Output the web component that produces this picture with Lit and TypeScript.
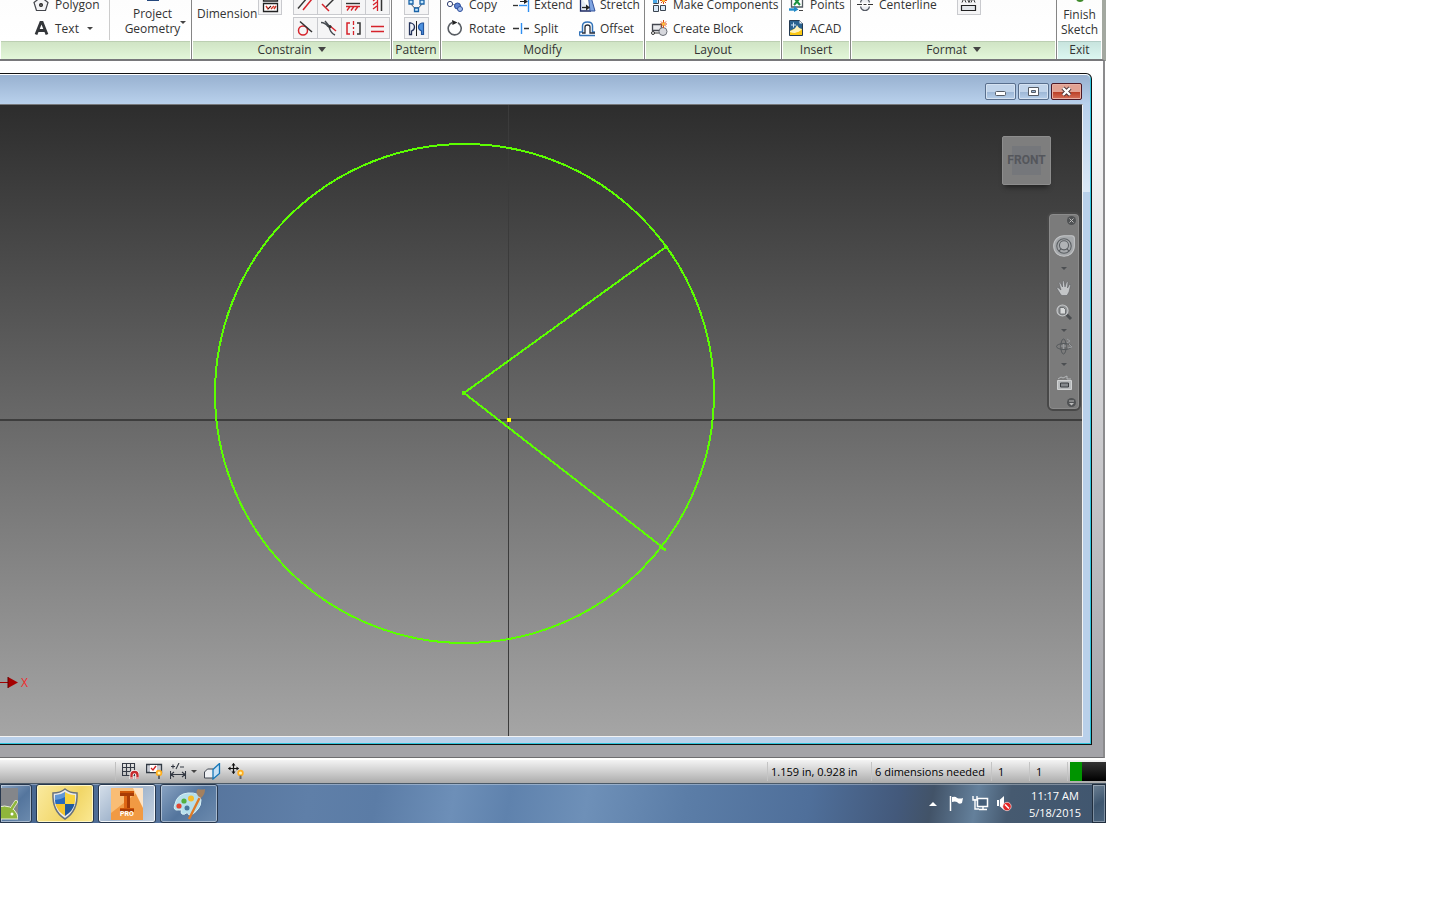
import { LitElement, html, svg, css } from "lit";
import type { SVGTemplateResult } from "lit";
import { customElement, property } from "lit/decorators.js";

const glyphs: Record<string, SVGTemplateResult> = {
  polygon: svg`<path d="M3.500 14.500 1 6.500 8 1l7 5.500-2.500 8z" fill="#f4f4f6" stroke="#44464c" stroke-width="1.200"/><circle cx="8" cy="9" r="2" fill="#222"/><circle cx="8" cy="9" r=".6" fill="#fff"/>`,
  text: svg`<path d="M3 14.500 7.800 2.500h1.400L14 14.500M5 10.500h7" fill="none" stroke="#33363a" stroke-width="2.800"/>`,
  copy: svg`<circle cx="3" cy="8" r="2.600" fill="#fff" stroke="#2d3c6e"/><path d="M6.500 8.500h2" stroke="#333" stroke-dasharray="1 1"/><circle cx="10.500" cy="10" r="3" fill="#5f83cf" stroke="#2b4c9b"/><circle cx="13" cy="13" r="2.500" fill="#a3bce9" stroke="#2b4c9b"/>`,
  rotate: svg`<path d="M11 2.800A6.500 6.500 0 1 1 5 2.500" fill="none" stroke="#595d63" stroke-width="1.600"/><path d="M5 0l5.500 2.600L5.500 5z" fill="#222"/>`,
  extend: svg`<path d="M0 9.500h5" stroke="#333" stroke-width="1.300"/><path d="M6 9.500h8" stroke="#2f8ff2" stroke-width="1.400"/><path d="M7 5.500h5" stroke="#222"/><path d="M11 3l4 2.500L11 8z" fill="#222"/><path d="M15.500 0v16" stroke="#2f8ff2" stroke-width="1.400"/>`,
  split: svg`<path d="M0 8.500h6M11 8.500h5" stroke="#333" stroke-width="1.400"/><path d="M8.500 3v11" stroke="#2f8ff2" stroke-width="1.400"/>`,
  stretch: svg`<path d="M1.500 1v14H12" fill="#e4eaf5" stroke="#1d2a63" stroke-width="1.300"/><path d="M9.500 1H12l4 14h-5z" fill="#7fa5e2" stroke="#34539b"/><path d="M3 11.500h5" stroke="#222" stroke-width="1.300"/><path d="M7 8.500l4 3-4 3z" fill="#222"/>`,
  offset: svg`<path d="M.5 15.500v-3.500h3V6q0-4 5-4t5 4v6h2.500M.5 15.500H16" fill="#fff" stroke="#3474b9" stroke-width="1.500"/><path d="M3 13h3V7q0-2 2.500-2T11 7v6h5" fill="none" stroke="#272d38" stroke-width="1.300"/>`,
  components: svg`<path d="M2.500 2.500h5v5h-5zM2.500 9.500h5v6h-5zM9.500 9.500h5v5h-5z" fill="#d9e9f8" stroke="#3a4450"/><path d="M2 2h4v5H2z" fill="#48a8e8"/><path d="M12.500 1v7M9 4.500h7M10 2l5 5M15 2l-5 5" stroke="#df4d14"/><circle cx="12.500" cy="4.500" r="1.500" fill="#ffc13a"/>`,
  block: svg`<path d="M1.500 4.500h9v6h-9z" fill="#e9eaed" stroke="#454850" stroke-width="1.300"/><circle cx="12" cy="11.500" r="4" fill="#d7d8dd" stroke="#696d75"/><circle cx="2" cy="13" r="1.500" fill="#fff" stroke="#333"/><path d="M3 13h5" stroke="#333"/><path d="M12.500 0v8M9 4h7M10 1.500l5 5M15 1.500l-5 5" stroke="#df4d14"/><circle cx="12.500" cy="4" r="1.600" fill="#ffc13a"/>`,
  points: svg`<path d="M3.500 1v10h11V1" fill="#fff" stroke="#525a60" stroke-width="1.300"/><path d="M6 2l6 7M12 2 6 9" stroke="#1b9140" stroke-width="2"/><path d="M1 13.500h7" stroke="#1f8ac9" stroke-width="2.400"/><path d="M6 10l4.500 3.500L6 16z" fill="#1f8ac9"/><path d="M11 14.500h4" stroke="#444"/>`,
  acad: svg`<path d="M1.500.5h10l3 3v12h-13z" fill="#2a6290" stroke="#243a52"/><path d="M11.500.5v3h3z" fill="#f5f7fa"/><path d="M2 11Q7 7 14 9v6H2z" fill="#fbc813"/><path d="M2 11q5-1 7-6 2 4 5 4v2q-5 1-12 4z" fill="#fff3bc"/><path d="M2 12q7 3 12-3v6H2z" fill="#fbc813"/><path d="M3 5h5M5.500 2.500v5" stroke="#cfe5f8"/>`,
  centerline: svg`<path d="M0 8.500h5M6.500 8.500h3M11 8.500h5" stroke="#333" stroke-width="1.200"/><path d="M3.500 6.500q1-4 4.500-4t4.500 4M3.500 10.500q1 4 4.500 4t4.500-4" fill="#eceef2" stroke="#555b65" stroke-width="1.200"/>`,
  showformat: svg`<path d="M2 6.500 4 2l2 4.500M7 2l2 4.500L11 2M11 6.500 13 2l2 4.500" fill="none" stroke="#333"/><path d="M1.500 9.500h14v5h-14z" fill="#e4e7eb" stroke="#222" stroke-width="1.200"/>`,
  constraints: svg`<path d="M1.500 1v4h14V1M1.500 7.500h14v8h-14z" fill="#fff" stroke="#222" stroke-width="1.300"/><path d="M4 10l2 3 3-3M9 13l3-3M12 13l2-3" fill="none" stroke="#cf3526" stroke-width="1.400"/><path d="M6 13l3-3" stroke="#222"/>`,
  parallel: svg`<path d="M1 12.500 10 2" stroke="#333" stroke-width="1.400"/><path d="M6 14 15 3" stroke="#d6232b" stroke-width="1.500"/>`,
  perpendicular: svg`<path d="M5 11 14 2" stroke="#333" stroke-width="1.400"/><path d="M1 8l7 7" stroke="#d6232b" stroke-width="1.500"/>`,
  ground: svg`<path d="M1 7.500h14" stroke="#333" stroke-width="1.400"/><path d="M1 10.500h14M5 10.500l-3 4M9 10.500l-3 4M13 10.500l-3 4" stroke="#d6232b" stroke-width="1.300"/>`,
  vertical: svg`<path d="M8.500 0v15M8 2 4 5M8 6 4 9M8 10l-4 3" stroke="#d6232b" stroke-width="1.300"/><path d="M12.500 0v15" stroke="#333" stroke-width="1.500"/>`,
  tangent: svg`<circle cx="6" cy="10.500" r="4.500" fill="none" stroke="#d6232b" stroke-width="1.500"/><path d="M3 1.500 15 12" stroke="#333" stroke-width="1.500"/>`,
  smooth: svg`<path d="M0 2.500q4 0 7 4l3 1M4 1l5 6" fill="none" stroke="#454a50" stroke-width="1.400"/><path d="M8 6q1 7 6 9" fill="none" stroke="#454a50" stroke-width="1.500"/><path d="M9 6l6 5" stroke="#d6232b" stroke-width="1.500"/><circle cx="9" cy="6.500" r="1.500" fill="#333"/>`,
  symmetric: svg`<path d="M5 3H2v11h3" fill="none" stroke="#d6232b" stroke-width="1.500"/><path d="M8.500 1v4M8.500 7v2M8.500 11v4" stroke="#d6232b" stroke-width="1.300"/><path d="M12 3h3v11h-3" fill="none" stroke="#333" stroke-width="1.500"/>`,
  equal: svg`<path d="M2 6.500h13M2 11.500h13" stroke="#d6232b" stroke-width="1.600"/>`,
  circular: svg`<circle cx="8.500" cy="7" r="5" fill="none" stroke="#4a5461"/><path d="M1 4h4v4H1zM12 4h4v4h-4zM6.500 12h4v3.500h-4z" fill="#c8e8fb" stroke="#1a63a8" stroke-width="1.300"/>`,
  mirror: svg`<path d="M1.500 3v11.500h2V11q3-1 3-4T3 3z" fill="#eef2f9" stroke="#24335a" stroke-width="1.300"/><path d="M8.500 1v15" stroke="#222"/><path d="M15.500 3v11.500h-2V11q-3-1-3-4t3.500-4z" fill="#4d92e0" stroke="#24559c" stroke-width="1.200"/>`,
  grid: svg`<path d="M.5.500h12v12H.5zM4.500.5v12M8.500.5v12M.5 4.500h12M.5 8.500h12" fill="none" stroke="#353a45" stroke-width="1.100"/><path d="M9.500 16v-4q0-3 3-3t3 3v4" fill="none" stroke="#fff" stroke-width="4"/><path d="M9.500 16v-4q0-3 3-3t3 3v4" fill="none" stroke="#c52a2e" stroke-width="2.400"/><path d="M8.300 15h2.400M14.300 15h2.400" stroke="#fff"/>`,
  sketchvis: svg`<path d="M.5 1.500h15v8H.5z" fill="#c9ccd4" stroke="#333b45" stroke-width="1.300"/><path d="M4 2h7v7H4z" fill="#fff"/><path d="M5 5l2 2 3-4" fill="none" stroke="#d02020" stroke-width="1.300"/><circle cx="13" cy="10" r="3.200" fill="#ffae20"/><circle cx="13" cy="10" r="1.500" fill="#fff3ae"/><path d="M13 12.500v3.500" stroke="#61646a" stroke-width="2"/>`,
  dims: svg`<path d="M1 3.500h4M3 1.500v4M6 6l3-6M10 4h4M.5 8v8M15.500 8v8M1 11.500h14M4 9l-3 2.500L4 14M12 9l3 2.500L12 14" fill="none" stroke="#333842" stroke-width="1.100"/>`,
  slice: svg`<path d="M.5 15V9l3-3h6v9z" fill="#eef0f3" stroke="#404650"/><path d="M9 6.500l6.500-6v10l-6.500 5.500z" fill="#c7e1f5" stroke="#1677b8" stroke-width="1.300"/>`,
  dof: svg`<path d="M5.500.5v10M.5 5.500h10" stroke="#111" stroke-width="1.200"/><path d="M3.500 2.500 5.500 0l2 2.500M3.500 8.500l2 2.500 2-2.500M2.500 3.500 0 5.500l2.500 2M8.500 3.500l2.500 2-2.500 2" fill="#111"/><circle cx="12.500" cy="10" r="3.200" fill="#ffae20"/><circle cx="12.500" cy="10" r="1.500" fill="#fff3ae"/><path d="M12.500 12.500v3.500" stroke="#61646a" stroke-width="2"/>`,
  wheel: svg`<path d="M8.500.5h6q2 0 2 2v6a8 8 0 1 1-8-8z" fill="#a5a8ab" stroke="#c3c5c7" stroke-width=".8"/><circle cx="8.500" cy="8.500" r="5.600" fill="none" stroke="#5a5e62" stroke-width=".8"/><circle cx="8.500" cy="8" r="3.500" fill="#b0b3b6" stroke="#5a5e62" stroke-width=".8"/><path d="M4.500 12.500l2-2M12.500 12.500l-2-2" stroke="#5a5e62" stroke-width=".8"/>`,
  hand: svg`<path d="M5 15 1 8.500q0-1.500 1.500-.5L5 10 3 3q.5-1.500 1.500 0L6.500 7 6.500 1.500q1-1.500 1.500 0L9 7l1.500-5q1-1 1.500 0L11.500 8l2-3.500q1.500-.5 1 1L13 12l-2 3.500H6z" fill="#c3c5c7" stroke="#56595c" stroke-width=".5"/>`,
  zoom: svg`<path d="M10 10l5 5" stroke="#4b4e51" stroke-width="3"/><circle cx="6.500" cy="6.500" r="5.500" fill="#8f9294" stroke="#c4c6c8" stroke-width="1.200"/><path d="M4 3.500h3.500L9.500 5.500V10H4z" fill="#d7d9da" stroke="#505356" stroke-width=".7"/>`,
  orbit: svg`<ellipse cx="8" cy="8.500" rx="7.500" ry="3" fill="none" stroke="#54585b"/><ellipse cx="7.500" cy="8.500" rx="2.700" ry="7.500" fill="none" stroke="#54585b"/><path d="M11 1l3 2-3 2M13 6l3 3-4 1M5 8h5M7.500 6v5" fill="none" stroke="#989b9e"/>`,
  lookat: svg`<path d="M1.500 6.500h14v9h-14z" fill="#b7babc" stroke="#d0d2d3"/><path d="M4.500 9h8v4h-8z" fill="#85898d" stroke="#393d41"/><path d="M2 5 5 3l2 1 4-2v3h4" fill="none" stroke="#b4b6b8"/>`,
  shield: svg`<path d="M16 1q5 4 12 4 1 18-12 26Q3 23 4 5 11 5 16 1z" fill="#e9eaec" stroke="#67717c" stroke-width="1.500"/><path d="M16 4v12H6.500Q5.500 12 6 7q6 0 10-3z" fill="#276abd"/><path d="M16 4q4 3 10 3 .5 5-.5 9H16z" fill="#f9d43e"/><path d="M6.500 16H16v12q-8-5-9.500-12z" fill="#f5c62f"/><path d="M16 16h9.500Q24 23 16 28z" fill="#20599f"/><path d="M6 7q6 0 10-3v5q-5 3-10 3z" fill="#9cc3ed" opacity=".5"/>`,
  inventor: svg`<rect width="32" height="32" fill="#f19a43"/><path d="M0 0h32L0 25z" fill="#f9bd75"/><path d="M22 0h10v20z" fill="#fde3c4"/><path d="M9 3h14v5h-4v12h4v4H9v-4h4V8H9z" fill="#a83c06"/><path d="M13 8h3v12h-3z" fill="#de6614"/><path d="M9 3h14v2H9zM9 20h14v1H9z" fill="#cf5609"/>`,
  paint: svg`<path d="M2 16Q4 6 15 5q12-1 13 7 0 6-3 9-4 6-9 6-1-3-3-2-1 2-4 1-2-2 0-4-4 0-6 0-3-1-1-6z" fill="#b5dfec" stroke="#d8eff4"/><circle cx="14" cy="20" r="2.500" fill="#47779c"/><circle cx="6" cy="18" r="2.600" fill="#e34632"/><circle cx="11" cy="13" r="2.600" fill="#53af3f"/><circle cx="18" cy="10.500" r="3" fill="#f6be2d"/><path d="M16 31 27 9" stroke="#dd7a27" stroke-width="2.400"/><path d="M26 10 29 3" stroke="#c9ccd0" stroke-width="3"/><path d="M25 8q-3-5 0-7 4 1 7 0 0 6-4 9z" fill="#a3805f"/>`,
  android: svg`<path d="M0 0h32v31H0z" fill="#84868a"/><path d="M26 20l4-6" stroke="#e8edda" stroke-width="4" stroke-linecap="round"/><path d="M5 31a13.500 13 0 0 1 27 0z" fill="#8fb63b" stroke="#e8edda"/><path d="M26 20l4-6" stroke="#8fb63b" stroke-width="2.400" stroke-linecap="round"/><circle cx="26" cy="26" r="1.500" fill="#fff"/>`,
  flag: svg`<path d="M2.500 1v15" stroke="#fff" stroke-width="1.500"/><path d="M4 2q4-1 5 1 3 1 6 0l-1 5q-3 2-5-1-2-1-5 0z" fill="#fff"/>`,
  network: svg`<path d="M5.500 3.500h10v8h-10z" fill="#455e79" stroke="#fff" stroke-width="1.500"/><path d="M7 14.500h8M11 12v2M1 1v4h4V1M3 4v10h4" fill="none" stroke="#fff" stroke-width="1.400"/>`,
  sound: svg`<path d="M1 5h2.500L8 1v14l-4.500-4H1z" fill="#fff"/><path d="M3.500 5v6" stroke="#66788c"/><circle cx="11" cy="11.500" r="4.200" fill="#e32626" stroke="#fff" stroke-width=".6"/><path d="M9 9.500l4 4" stroke="#fff" stroke-width="1.500"/>`,
};

const icon = (name: string) => {
  const large = ["shield", "inventor", "paint", "android"].includes(name);
  return html`<svg class="icon ${large ? "large" : ""}" viewBox=${large ? "0 0 32 32" : "0 0 17 17"} aria-hidden="true">${glyphs[name]}</svg>`;
};

const shared = css`
  :host { display: block; font: 12px/15px "Open Sans", "Noto Sans", sans-serif; color: #333; }
  * { box-sizing: border-box; }
  button { font: inherit; color: inherit; padding: 0; margin: 0; border: 0; background: none; white-space: nowrap; }
  .icon { width: 17px; height: 17px; flex: none; display: block; }
  .large { width: 32px; height: 32px; }
  .caret { flex: none; width: 0; border: 3px solid transparent; border-top: 3px solid #444; border-bottom: 0; }
`;

@customElement("ribbon-panel")
export class RibbonPanel extends LitElement {
  @property() label = "";
  @property({ type: Boolean }) expandable = false;
  @property({ type: Boolean, reflect: true }) exit = false;

  static styles = [shared, css`
    :host { display: flex; flex-direction: column; border-right: 1px solid #858585; min-width: 0; }
    :host([exit]) { border-right: 0; }
    .body { height: 41px; display: flex; align-items: flex-end; overflow: hidden; background: linear-gradient(#fdfdfd, #fff); }
    .foot { height: 18px; width: 100%; border: 1px solid #fff; border-width: 0 1px; padding-bottom: 2px; display: flex; align-items: center; justify-content: center; gap: 6px; background: linear-gradient(#bccfb2 0 1px, #d0e4c5 1px, #e3f7d9); }
    :host([exit]) .foot { background: linear-gradient(#b2cdc6 0 1px, #c8e4de 1px, #dcf7f1); }
    .caret { border-width: 5px 4px 0; }
  `];

  render() {
    return html`<div class="body"><slot></slot></div>
      <button class="foot">${this.label}${this.expandable ? html`<i class="caret"></i>` : ""}</button>`;
  }
}

@customElement("sketch-ribbon")
export class SketchRibbon extends LitElement {
  static styles = [shared, css`
    :host { background: #fff; border-right: 4px solid #a3a8a0; border-bottom: 2px solid #77777a; }
    .panels { display: flex; }
    .create { flex: 0 0 192px; }
    .constrain { flex: 0 0 200px; }
    .pattern { flex: 0 0 49px; }
    .modify { flex: 0 0 204px; }
    .layout { flex: 0 0 137px; }
    .insert { flex: 0 0 69px; }
    .format { flex: 1; }
    .exit { flex: 0 0 45px; }
    .column { flex: none; display: flex; flex-direction: column; margin-left: 6px; padding-bottom: 1px; }
    .column.first { margin-left: 33px; width: 76px; }
    .column.wide { width: 66px; }
    .column.mid { width: 66px; margin-left: 0; }
    .tool { display: flex; align-items: center; gap: 5px; height: 24px; }
    .column.mid .tool { gap: 4px; }
    .tool .caret { margin-left: 3px; }
    .bigtool { flex: 1; display: flex; flex-direction: column; align-items: center; padding-bottom: 4px; }
    .project { border-left: 1px solid #ccc; position: relative; margin-bottom: 1px; padding-left: 4px; }
    .project .caret { position: absolute; right: 5px; bottom: 16px; }
    .chip { width: 12px; height: 10px; margin-bottom: 5px; background: #24477c; }
    .tick { width: 8px; height: 10px; margin-bottom: 5px; border-radius: 4px; background: #3f8a2b; }
    .dimension { margin: 0 1px 20px 5px; }
    .boxes { display: grid; grid-template-columns: repeat(4, 24px); margin: 0 0 2px 11px; }
    .boxes.one { grid-template-columns: 24px; margin-left: 12px; }
    .box { width: 24px; height: 22px; border: 1px solid #c9cace; display: flex; align-items: center; justify-content: center; background: #f5f5f6; margin-top: 2px; }
    .boxes .box { width: 25px; }
    .raised { margin: 0 0 26px; }
    .gap { margin-left: 20px; }
  `];

  private tool(name: string, label: string, caret = false) {
    return html`<button class="tool">${icon(name)}<span>${label}</span>${caret ? html`<i class="caret"></i>` : ""}</button>`;
  }

  private box(name: string, extra = "") {
    return html`<button class="box ${extra}" aria-label=${name}>${icon(name)}</button>`;
  }

  render() {
    return html`<nav class="panels">
      <ribbon-panel class="create">
        <div class="column first">${this.tool("polygon", "Polygon")}${this.tool("text", "Text", true)}</div>
        <button class="bigtool project"><span class="chip"></span><span>Project</span><span>Geometry</span><i class="caret"></i></button>
      </ribbon-panel>
      <ribbon-panel class="constrain" label="Constrain" expandable>
        <button class="dimension">Dimension</button>${this.box("constraints", "raised")}
        <div class="boxes">
          ${["parallel", "perpendicular", "ground", "vertical", "tangent", "smooth", "symmetric", "equal"].map((n) => this.box(n))}
        </div>
      </ribbon-panel>
      <ribbon-panel class="pattern" label="Pattern">
        <div class="boxes one">${this.box("circular")}${this.box("mirror")}</div>
      </ribbon-panel>
      <ribbon-panel class="modify" label="Modify">
        <div class="column wide">${this.tool("copy", "Copy")}${this.tool("rotate", "Rotate")}</div>
        <div class="column mid">${this.tool("extend", "Extend")}${this.tool("split", "Split")}</div>
        <div class="column mid">${this.tool("stretch", "Stretch")}${this.tool("offset", "Offset")}</div>
      </ribbon-panel>
      <ribbon-panel class="layout" label="Layout">
        <div class="column">${this.tool("components", "Make Components")}${this.tool("block", "Create Block")}</div>
      </ribbon-panel>
      <ribbon-panel class="insert" label="Insert">
        <div class="column">${this.tool("points", "Points")}${this.tool("acad", "ACAD")}</div>
      </ribbon-panel>
      <ribbon-panel class="format" label="Format" expandable>
        <div class="column">${this.tool("centerline", "Centerline")}<div class="tool"></div></div>
        <div class="gap">${this.box("showformat", "raised")}</div>
      </ribbon-panel>
      <ribbon-panel class="exit" label="Exit" exit>
        <button class="bigtool"><span class="tick"></span><span>Finish</span><span>Sketch</span></button>
      </ribbon-panel>
    </nav>`;
  }
}

@customElement("sketch-window")
export class SketchWindow extends LitElement {
  static styles = [shared, css`
    :host { display: flex; flex: 1; min-height: 0; background: linear-gradient(#fff, #f4f4f5 12%, #a3a3a8 97%); border-right: 2px solid #8b8b8d; border-bottom: 1px solid #6d6d70; padding: 12px 11px 12px 0; margin-right: 1px; }
    .window { flex: 1; display: flex; flex-direction: column; border: 1px solid #111; border-left: 0; border-radius: 0 6px 0 0; padding-bottom: 7px; background: #b9d0ea; box-shadow: inset -1px -1px #2fc5dd, inset 0 1px #fff; }
    .title { height: 29px; display: flex; justify-content: flex-end; align-items: flex-start; gap: 2px; padding: 8px 8px 0 0; margin-top: 1px; margin-right: 1px; border-radius: 0 5px 0 0; background: linear-gradient(#98b1d0, #b9d1ec); }
    .control { width: 31px; height: 17px; border: 1px solid #596f8d; border-radius: 2px; display: flex; align-items: center; justify-content: center; background: linear-gradient(#c1d4ea 50%, #9bb5d4 50%, #b7cfea); box-shadow: inset 0 0 0 1px #d5e2f1; }
    .close { border-color: #4d1825; background: linear-gradient(#e2a293 50%, #b83b22 50%, #d5705a); box-shadow: inset 0 0 0 1px #e8b0a3; }
    .control svg { width: 13px; height: 11px; }
    .frame { flex: 1; display: flex; min-height: 0; padding-right: 7px; margin-right: 1px; background: linear-gradient(#b9d1ec, #dbe8f6 88px, #b9d0ea 88px); }
    .canvas { flex: 1; position: relative; overflow: hidden; border: 1px solid #f3f3f3; border-top-color: #77797c; border-left: 0; background: linear-gradient(#2d2d2d, #696969 50%, #a5a5a5); }
    .sketch { position: absolute; inset: 0; width: 100%; height: 100%; }
    .cube { position: absolute; top: 31px; right: 31px; width: 49px; height: 49px; border: 1px solid #8d8d8d; border-radius: 2px; background: #7e7e7e; display: flex; align-items: center; justify-content: center; box-shadow: 0 5px 5px -3px #202020; color: #54565b; font: 700 12px/15px Roboto, sans-serif; }
    .face { background: #75777b; height: 29px; width: 29px; display: flex; align-items: center; justify-content: center; }
    .navbar { position: absolute; top: 107px; right: 1px; width: 34px; height: 199px; border: 2px solid #484848; border-radius: 6px; background: #7b7b7b; box-shadow: inset 0 0 0 1px #8b8b8b; display: flex; flex-direction: column; align-items: center; padding: 2px 0; }
    .round { align-self: flex-end; margin-right: 3px; width: 9px; height: 9px; border-radius: 50%; background: #505254; display: flex; }
    .round svg { width: 9px; height: 9px; }
    .wheel { margin: 10px 0; }
    .wheel .icon { width: 22px; height: 22px; }
    .caret { border-top-color: #4c4f52; }
    .rule { height: 1px; width: 26px; background: #5a5a5a; margin: 4px 0 6px; }
    .zoom { margin: 7px 0 8px; }
    .orbit { margin: 6px 0 8px; }
    .look { margin: 8px 0 7px; }
  `];

  render() {
    return html`<section class="window">
      <header class="title">
        <button class="control" aria-label="Minimize"><svg viewBox="0 0 13 11"><rect x="1.500" y="5.500" width="10" height="4" rx="1" fill="#fff" stroke="#555c66"/></svg></button>
        <button class="control" aria-label="Restore"><svg viewBox="0 0 13 11"><path d="M1.500 1.500h10v8h-10z" fill="#fff" stroke="#555c66"/><path d="M4.500 4.500h4v2h-4z" fill="#9bb5d4" stroke="#555c66"/></svg></button>
        <button class="control close" aria-label="Close"><svg viewBox="0 0 13 11"><path d="M3 2l7 7M10 2 3 9" stroke="#4c3438" stroke-width="4.200"/><path d="M3 2l7 7M10 2 3 9" stroke="#fff" stroke-width="2.400"/></svg></button>
      </header>
      <div class="frame"><div class="canvas">
        <svg class="sketch" aria-label="Sketch">
          <path d="M508.500 0v900" stroke="#3b3b3b"/>
          <path d="M0 315h2000" stroke="#3d3d3d" stroke-width="2"/>
          <g fill="none" stroke="#5cff00" stroke-width="2" shape-rendering="crispEdges">
            <circle cx="464.500" cy="288.500" r="249.500"/>
            <path d="M666 142 464 288 666 445"/>
            <path d="M664 142h4M666 140v4M659 442l6 3" stroke-width="1.500"/>
          </g>
          <path d="M462 286h4v4h-4z" fill="#5cff00"/>
          <path d="M507 313h4v4h-4z" fill="#ff0"/>
          <path d="M0 577.500h10" stroke="#a00000"/><path d="M8 572l10 5.500L8 583z" fill="#a50000"/>
          <path d="M8 572v11" stroke="#5e0000"/>
          <text x="21" y="582" fill="#f02a2a" font-size="12">X</text>
        </svg>
        <button class="cube"><span class="face">FRONT</span></button>
        <div class="navbar">
          <button class="round" aria-label="Close bar"><svg viewBox="0 0 9 9"><path d="M2.500 2.500l4 4M6.500 2.500l-4 4" stroke="#bbb"/></svg></button>
          <button class="wheel" aria-label="Wheel">${icon("wheel")}</button><i class="caret"></i>
          <span class="rule"></span>
          <button aria-label="Pan">${icon("hand")}</button>
          <button class="zoom" aria-label="Zoom">${icon("zoom")}</button><i class="caret"></i>
          <button class="orbit" aria-label="Orbit">${icon("orbit")}</button><i class="caret"></i>
          <button class="look" aria-label="Look at">${icon("lookat")}</button>
          <button class="round" aria-label="Options"><svg viewBox="0 0 9 9"><path d="M2 3h5" stroke="#bbb"/><path d="M2 5h5L4.500 7.500z" fill="#bbb"/></svg></button>
        </div>
      </div></div>
    </section>`;
  }
}

@customElement("status-bar")
export class StatusBar extends LitElement {
  static styles = [shared, css`
    :host { display: flex; justify-content: space-between; height: 26px; padding-top: 2px; background: linear-gradient(#fff 0 2px, #f4f4f4 2px, #ababab); border-bottom: 1px solid #4b5a68; color: #000; font-size: 11px; }
    .tools { display: flex; align-items: center; gap: 7px; margin: 2px 0 2px 115px; border-left: 1px solid #c0c0c0; padding-left: 6px; }
    .drop { display: flex; align-items: center; gap: 4px; }
    .cells { display: flex; margin: 2px 0; }
    .cell { border-left: 1px solid #c4c4c4; padding-left: 3px; display: flex; align-items: center; white-space: nowrap; }
    .coords { width: 104px; }
    .need { width: 120px; }
    .count { width: 38px; padding-left: 6px; }
    .meter { width: 39px; padding: 0 0 0 2px; align-items: stretch; }
    .used { width: 12px; background: #009400; }
    .free { flex: 1; background: linear-gradient(#333, #000); }
  `];

  render() {
    return html`<div class="tools">
        <button aria-label="Snap">${icon("grid")}</button>
        <button aria-label="Constraints">${icon("sketchvis")}</button>
        <button class="drop" aria-label="Dimension display">${icon("dims")}<i class="caret"></i></button>
        <button aria-label="Slice">${icon("slice")}</button>
        <button aria-label="Freedom">${icon("dof")}</button>
      </div>
      <div class="cells">
        <span class="cell coords">1.159 in, 0.928 in</span>
        <span class="cell need">6 dimensions needed</span>
        <span class="cell count">1</span><span class="cell count">1</span>
        <span class="cell meter"><i class="used"></i><i class="free"></i></span>
      </div>`;
  }
}

@customElement("task-bar")
export class TaskBar extends LitElement {
  static styles = [shared, css`
    :host { display: flex; height: 39px; color: #fff; background: linear-gradient(#ffffff50 0 1px, #ffffff00 1px), linear-gradient(100deg, #46658f 0%, #56749c 18%, #5f7fa8 28%, #5b7ca6 34%, #6d8fb8 41%, #5f82ad 46%, #6e90b8 53%, #5b7da7 62%, #4f6f9a 73%, #43597b 81%, #425368 84%, #64809b 88%, #465a70 91%, #40566f 100%); }
    .apps { display: flex; flex: 1; gap: 4px; }
    .app { width: 58px; border: 1px solid #27374d; border-radius: 3px; box-shadow: inset 0 0 0 1px #ffffff70; display: flex; align-items: center; justify-content: center; background: linear-gradient(135deg, #8aa4c3, #54759d 50%, #6c8bae); position: relative; }
    .app:first-child { width: 32px; justify-content: flex-end; padding-right: 13px; overflow: hidden; border-radius: 0 3px 3px 0; }
    .gold { background: linear-gradient(120deg, #faeaa0, #f1d667 60%, #fbe993); box-shadow: inset 0 0 0 1px #fff8c8; }
    .active { background: linear-gradient(135deg, #d5dfea, #a3b6cd 50%, #c5d2e1); box-shadow: inset 0 0 0 1px #f2f6fa; }
    .pro { position: absolute; bottom: 3px; left: 0; right: 0; text-align: center; font: 700 7px/10px Roboto, sans-serif; }
    .tray { display: flex; align-items: center; gap: 7px; }
    .up { width: 0; border: 4px solid transparent; border-bottom-color: #fff; border-top: 0; margin-right: 4px; }
    .clock { font-size: 11px; line-height: 17px; text-align: center; width: 66px; margin-left: 2px; margin-right: 1px; }
    .desktop { width: 14px; align-self: stretch; border: 1px solid #202e3e; box-shadow: inset 0 0 0 1px #ffffff50; background: linear-gradient(150deg, #6c8093, #3e566f 50%, #4a637c); }
    .clock, .desktop { flex: none; }
    .desktop { margin-left: -4px; }
  `];

  render() {
    return html`<nav class="apps">
        <button class="app" aria-label="Android">${icon("android")}</button>
        <button class="app gold" aria-label="Security">${icon("shield")}</button>
        <button class="app active">${icon("inventor")}<span class="pro">PRO</span></button>
        <button class="app" aria-label="Paint">${icon("paint")}</button>
      </nav>
      <div class="tray">
        <button class="up" aria-label="Hidden icons"></button>
        <button aria-label="Action center">${icon("flag")}</button>
        <button aria-label="Network">${icon("network")}</button>
        <button aria-label="Volume">${icon("sound")}</button>
        <button class="clock">11:17 AM<br>5/18/2015</button>
        <button class="desktop" aria-label="Show desktop"></button>
      </div>`;
  }
}

@customElement("app-root")
export class AppRoot extends LitElement {
  static styles = css`
    :host { display: block; background: #fff; }
    * { box-sizing: border-box; }
    .page { height: 100vh; padding: 0 334px 77px 0; display: flex; flex-direction: column; overflow: hidden; }
  `;

  render() {
    return html`<main class="page">
      <sketch-ribbon></sketch-ribbon>
      <sketch-window></sketch-window>
      <status-bar></status-bar>
      <task-bar></task-bar>
    </main>`;
  }
}
